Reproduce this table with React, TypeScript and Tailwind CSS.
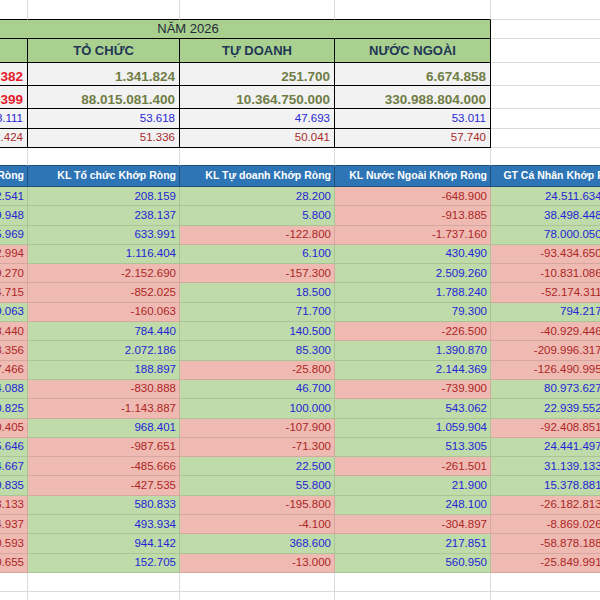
import React from 'react';

const W = ['w-[142px]', 'w-[152px]', 'w-[155px]', 'w-[156px]', 'w-[137px]'];

const flows = [
  { o: '208.159', t: '28.200', f: '-648.900', g: '24.511.634.120' },
  { o: '238.137', t: '5.800', f: '-913.885', g: '38.498.448.300' },
  { o: '633.991', t: '-122.800', f: '-1.737.160', g: '78.000.050.450' },
  { o: '1.116.404', t: '6.100', f: '430.490', g: '-93.434.650.200' },
  { o: '-2.152.690', t: '-157.300', f: '2.509.260', g: '-10.831.086.900' },
  { o: '-852.025', t: '18.500', f: '1.788.240', g: '-52.174.311.600' },
  { o: '-160.063', t: '71.700', f: '79.300', g: '794.217.350' },
  { o: '784.440', t: '140.500', f: '-226.500', g: '-40.929.446.100' },
  { o: '2.072.186', t: '85.300', f: '1.390.870', g: '-209.996.317.800' },
  { o: '188.897', t: '-25.800', f: '2.144.369', g: '-126.490.995.400' },
  { o: '-830.888', t: '46.700', f: '-739.900', g: '80.973.627.250' },
  { o: '-1.143.887', t: '100.000', f: '543.062', g: '22.939.552.700' },
  { o: '968.401', t: '-107.900', f: '1.059.904', g: '-92.408.851.050' },
  { o: '-987.651', t: '-71.300', f: '513.305', g: '24.441.497.600' },
  { o: '-485.666', t: '22.500', f: '-261.501', g: '31.139.133.900' },
  { o: '-427.535', t: '55.800', f: '21.900', g: '15.378.881.150' },
  { o: '580.833', t: '-195.800', f: '248.100', g: '-26.182.813.500' },
  { o: '493.934', t: '-4.100', f: '-304.897', g: '-8.869.026.300' },
  { o: '944.142', t: '368.600', f: '217.851', g: '-58.878.188.750' },
  { o: '152.705', t: '-13.000', f: '560.950', g: '-25.849.991.200' },
];

const toNum = (s: string) => parseInt(s.replace(/\./g, ''), 10);
const fmt = (n: number) => (n < 0 ? '-' : '') + Math.abs(n).toString().replace(/\B(?=(\d{3})+(?!\d))/g, '.');

const summary = [
  { cells: ['8.262.382', '1.341.824', '251.700', '6.674.858'], first: 'text-[#e3202c] font-bold text-[13.5px]', rest: 'text-[#707d46] font-bold text-[13.5px]', h: 'h-[23px]', align: 'items-end pb-[2px]' },
  { cells: ['1.240.553.399', '88.015.081.400', '10.364.750.000', '330.988.804.000'], first: 'text-[#e3202c] font-bold text-[13.5px]', rest: 'text-[#707d46] font-bold text-[13.5px]', h: 'h-[23px]', align: 'items-end pb-[2px]' },
  { cells: ['48.111', '53.618', '47.693', '53.011'], first: 'text-[#2626d4] text-[11.5px]', rest: 'text-[#2626d4] text-[11.5px]', h: 'h-[20px]', align: 'items-center' },
  { cells: ['52.424', '51.336', '50.041', '57.740'], first: 'text-[#a82a2a] text-[11.5px]', rest: 'text-[#a82a2a] text-[11.5px]', h: 'h-[19px]', align: 'items-center' },
];

const Blank = ({ i, h, b = 'border-b-[#dadada]' }: { i: number; h: string; b?: string }) => (
  <div className={`${W[i]} ${h} shrink-0 border-r border-b border-r-[#dadada] ${b}`} />
);

const FlowCell = ({ i, v }: { i: number; v: string }) => {
  const neg = v.startsWith('-');
  return (
    <div
      className={`${W[i]} h-[19.3px] shrink-0 overflow-hidden flex items-center justify-end pr-[3px] whitespace-nowrap border-r border-b border-black/10 text-[11.5px] ${
        neg ? 'bg-[#eebab2] text-[#ad2626]' : 'bg-[#bedba9] text-[#2424d6]'
      }`}
    >
      {v}
    </div>
  );
};

export default function App() {
  const heads = ['KL Cá Nhân Khớp Ròng', 'KL Tổ chức Khớp Ròng', 'KL Tự doanh Khớp Ròng', 'KL Nước Ngoài Khớp Ròng', 'GT Cá Nhân Khớp Ròng'];
  return (
    <div className="w-[600px] h-[600px] overflow-hidden bg-white" style={{ fontFamily: '"Liberation Sans", Arial, sans-serif' }}>
      <div className="-ml-[114px] w-[760px] flex flex-col">
        {/* blank top row */}
        <div className="flex">
          {[0, 1, 2, 3].map((i) => (
            <Blank key={i} i={i} h="h-[20px]" b="border-b-black" />
          ))}
          <Blank i={4} h="h-[20px]" />
        </div>

        {/* year */}
        <div className="flex">
          <div className="w-[605px] h-[19px] shrink-0 bg-[#a9d08e] border-r border-b border-black flex items-center justify-center text-[13px] text-[#1e2b38]">
            NĂM 2026
          </div>
          <Blank i={4} h="h-[19px]" />
        </div>

        {/* group header */}
        <div className="flex">
          {['CÁ NHÂN', 'TỎ CHỨC', 'TỰ DOANH', 'NƯỚC NGOÀI'].map((t, i) => (
            <div
              key={t}
              className={`${W[i]} h-[24px] shrink-0 bg-[#a9d08e] border-r border-b border-black flex items-center justify-center font-bold text-[13px] text-[#1f3656]`}
            >
              {t}
            </div>
          ))}
          <Blank i={4} h="h-[24px]" />
        </div>

        {summary.map((r, ri) => (
          <div key={ri} className="flex">
            {r.cells.map((c, i) => (
              <div
                key={i}
                className={`${W[i]} ${r.h} ${r.align} shrink-0 overflow-hidden flex justify-end pr-[4px] leading-none whitespace-nowrap bg-[#f2f2f2] border-r border-b border-black ${i === 0 ? r.first : r.rest}`}
              >
                {c}
              </div>
            ))}
            <Blank i={4} h={r.h} />
          </div>
        ))}

        {/* spacer row */}
        <div className="flex">
          {[0, 1, 2, 3, 4].map((i) => (
            <Blank key={i} i={i} h="h-[18px]" b="border-b-[#1f4e79]" />
          ))}
        </div>

        {/* blue header */}
        <div className="flex">
          {heads.map((t, i) => (
            <div
              key={t}
              className={`${W[i]} h-[21px] shrink-0 overflow-hidden flex items-center justify-end pr-[3px] whitespace-nowrap bg-[#2e75b6] border-r border-b border-[#1f4e79] text-white font-bold text-[10.5px]`}
            >
              {t}
            </div>
          ))}
        </div>

        {flows.map((r, ri) => {
          const a = -(toNum(r.o) + toNum(r.t) + toNum(r.f));
          return (
            <div key={ri} className="flex">
              <FlowCell i={0} v={fmt(a)} />
              <FlowCell i={1} v={r.o} />
              <FlowCell i={2} v={r.t} />
              <FlowCell i={3} v={r.f} />
              <FlowCell i={4} v={r.g} />
            </div>
          );
        })}

        {[0, 1].map((k) => (
          <div key={k} className="flex">
            {[0, 1, 2, 3, 4].map((i) => (
              <Blank key={i} i={i} h="h-[19px]" />
            ))}
          </div>
        ))}
      </div>
    </div>
  );
}
